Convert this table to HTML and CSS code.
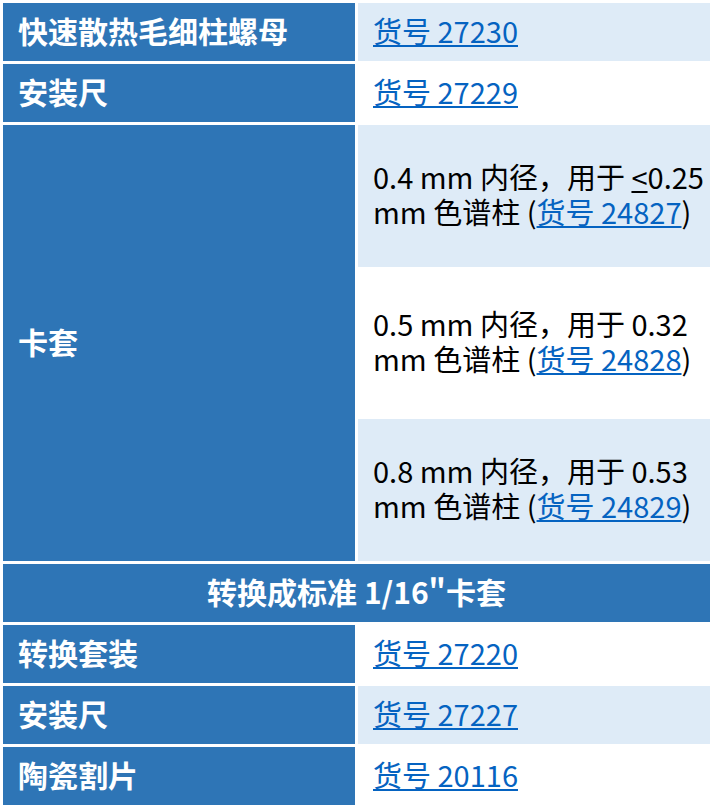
FILE: index.html
```html
<!DOCTYPE html>
<html lang="zh-CN">
<head>
<meta charset="utf-8">
<title>卡套</title>
<link rel="stylesheet" href="styles.css">
</head>
<body>
<table class="spec">
  <tbody>
    <tr>
      <th class="label">快速散热毛细柱螺母</th>
      <td class="value shade"><a href="#">货号 27230</a></td>
    </tr>
    <tr>
      <th class="label">安装尺</th>
      <td class="value"><a href="#">货号 27229</a></td>
    </tr>
    <tr>
      <th class="label" rowspan="3">卡套</th>
      <td class="value tall shade">0.4 mm 内径，用于 <u>&lt;</u>0.25 mm 色谱柱 (<a href="#">货号 24827</a>)</td>
    </tr>
    <tr>
      <td class="value tall mid">0.5 mm 内径，用于 0.32 mm 色谱柱 (<a href="#">货号 24828</a>)</td>
    </tr>
    <tr>
      <td class="value tall shade">0.8 mm 内径，用于 0.53 mm 色谱柱 (<a href="#">货号 24829</a>)</td>
    </tr>
    <tr>
      <th class="label heading" colspan="2">转换成标准 1/16"卡套</th>
    </tr>
    <tr>
      <th class="label">转换套装</th>
      <td class="value"><a href="#">货号 27220</a></td>
    </tr>
    <tr>
      <th class="label">安装尺</th>
      <td class="value shade"><a href="#">货号 27227</a></td>
    </tr>
    <tr>
      <th class="label">陶瓷割片</th>
      <td class="value"><a href="#">货号 20116</a></td>
    </tr>
  </tbody>
</table>
</body>
</html>
```

FILE: styles.css
```css
html, body {
  margin: 0;
  padding: 0;
  background: #ffffff;
}

.spec {
  width: 713px;
  border-collapse: separate;
  border-spacing: 3px;
  table-layout: fixed;
  font-family: "Noto Sans CJK SC", "Noto Sans", sans-serif;
  font-size: 29px;
  line-height: 35px;
}

.label {
  width: 322px;
  background: #2e75b6;
  color: #ffffff;
  font-weight: bold;
  font-size: 30px;
  text-align: left;
  vertical-align: middle;
  padding: 10px 15px 13px 15px;
}

.heading {
  text-align: center;
}

.value {
  background: #ffffff;
  color: #000000;
  vertical-align: middle;
  padding: 10px 6px 13px 15px;
}

.shade {
  background: #deebf7;
}

.tall {
  padding-top: 34px;
  padding-bottom: 38px;
}

.mid {
  padding-top: 36px;
  padding-bottom: 40px;
}

.value a {
  color: #0563c1;
  text-decoration: underline;
}

.value u {
  text-decoration: underline;
}
```
